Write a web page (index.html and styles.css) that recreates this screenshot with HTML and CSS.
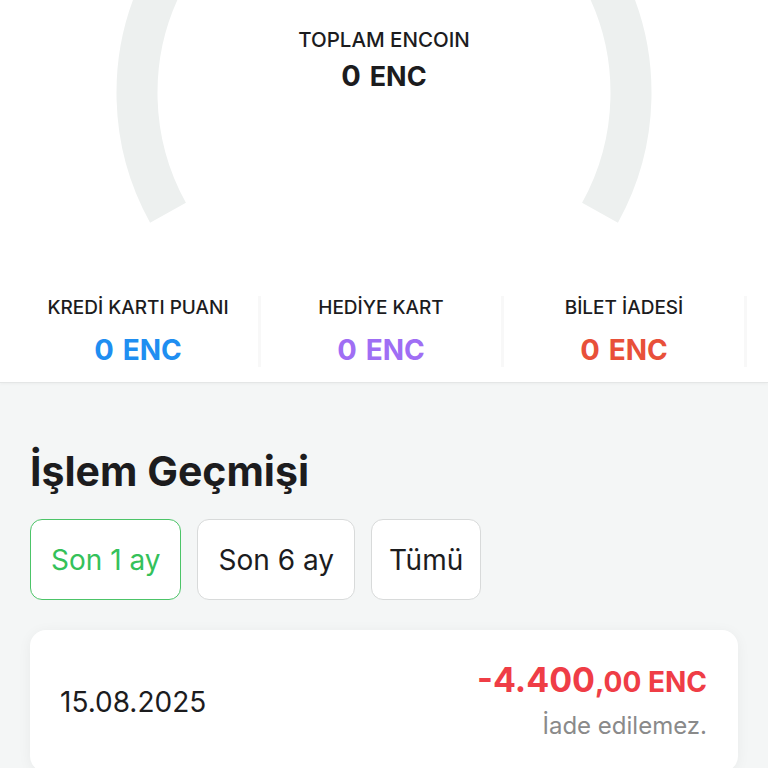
FILE: index.html
```html
<!DOCTYPE html>
<html lang="tr">
	<head>
		<meta charset="utf-8" />
		<title>Encoin</title>
		<link rel="stylesheet" href="styles.css">
	</head>
	<body>
		<div class="hero">
			<svg class="gauge" width="768" height="262" viewBox="0 0 768 262">
				<path d="M168 212.7 A247 247 0 1 1 600 212.7" />
			</svg>
			<div class="total">
				<div class="total-label">TOPLAM ENCOIN</div>
				<div class="value"><span class="num">0</span> <span class="unit">ENC</span></div>
			</div>
		</div>

		<div class="stats">
			<div class="stat">
				<div class="stat-label">KREDİ KARTI PUANI</div>
				<div class="value blue"><span class="num">0</span> <span class="unit">ENC</span></div>
			</div>
			<div class="stat">
				<div class="stat-label">HEDİYE KART</div>
				<div class="value purple"><span class="num">0</span> <span class="unit">ENC</span></div>
			</div>
			<div class="stat">
				<div class="stat-label">BİLET İADESİ</div>
				<div class="value orange"><span class="num">0</span> <span class="unit">ENC</span></div>
			</div>
			<div class="stat"></div>
		</div>

		<section class="history">
			<h2>İşlem Geçmişi</h2>
			<div class="chips">
				<button class="chip active">Son 1 ay</button>
				<button class="chip">Son 6 ay</button>
				<button class="chip short">Tümü</button>
			</div>

			<div class="card">
				<div class="date">15.08.2025</div>
				<div class="tx">
					<div class="tx-amount"><span class="big">-4.400</span><span class="small">,00 ENC</span></div>
					<div class="tx-note">İade edilemez.</div>
				</div>
			</div>
		</section>
	</body>
</html>
```

FILE: styles.css
```css
body {
	margin: 0;
	font-family: Inter, "Noto Sans", sans-serif;
	color: #1c1c1e;
	background: #f4f6f6;
	overflow: hidden;
}

/* top gauge */
.hero {
	position: relative;
	height: 262px;
	background: #fff;
	overflow: hidden;
}
.gauge {
	position: absolute;
	top: 0;
	left: 0;
}
.gauge path {
	fill: none;
	stroke: #edf0ef;
	stroke-width: 41;
}
.total {
	position: relative;
	padding-top: 27px;
	text-align: center;
}
.total-label {
	font-size: 20.5px;
	font-weight: 500;
	line-height: 26px;
}
.value {
	font-weight: 700;
	line-height: 36px;
	margin-top: 5px;
}
.value .num { font-size: 29px; }
.value .unit {
	font-size: 27px;
	margin-left: 5px;
}
.blue { color: #1f8ef1; }
.purple { color: #9f6ef4; }
.orange { color: #e8503a; }

/* stat columns */
.stats {
	display: flex;
	padding: 34px 0 15px 18px;
	background: #fff;
	border-bottom: 1px solid #e4e6e6;
	box-shadow: 0 1px 3px rgba(0, 0, 0, 0.04);
	overflow: hidden;
}
.stat {
	flex: none;
	width: 243px;
	height: 71px;
	box-sizing: border-box;
	border-right: 3px solid #f8f8f8;
	text-align: center;
	padding-top: 1px;
}
.stat-label {
	font-size: 19px;
	font-weight: 500;
	line-height: 22px;
}
.stat .value { margin-top: 13px; }
.stat .value .unit { font-size: 28px; }

/* history */
.history {
	padding: 65px 30px 0;
}
.history h2 {
	margin: 0;
	font-size: 41px;
	font-weight: 700;
	line-height: 46px;
}
.chips {
	display: flex;
	gap: 16px;
	margin-top: 25px;
}
.chip {
	height: 81px;
	padding: 0 20px;
	background: #fff;
	border: 1px solid #d8dada;
	border-radius: 12px;
	font-family: inherit;
	font-size: 28px;
	color: #1c1c1e;
}
.chip.short { padding: 0 17px; }
.chip.active {
	border-color: #4cc468;
	color: #34c15a;
}
.card {
	display: flex;
	justify-content: space-between;
	align-items: center;
	height: 142px;
	margin-top: 30px;
	padding: 0 31px 0 30px;
	background: #fff;
	border-radius: 16px;
	box-shadow: 0 2px 14px rgba(0, 0, 0, 0.05);
}
.date {
	font-size: 28px;
	margin-top: 1px;
}
.tx {
	text-align: right;
	margin-top: -1px;
}
.tx-amount {
	color: #ef3d46;
	font-weight: 700;
	line-height: 38px;
}
.tx-amount .big { font-size: 34px; }
.tx-amount .small { font-size: 28px; }
.tx-note {
	margin-top: 6px;
	font-size: 24px;
	color: #8a8a8a;
}
```
